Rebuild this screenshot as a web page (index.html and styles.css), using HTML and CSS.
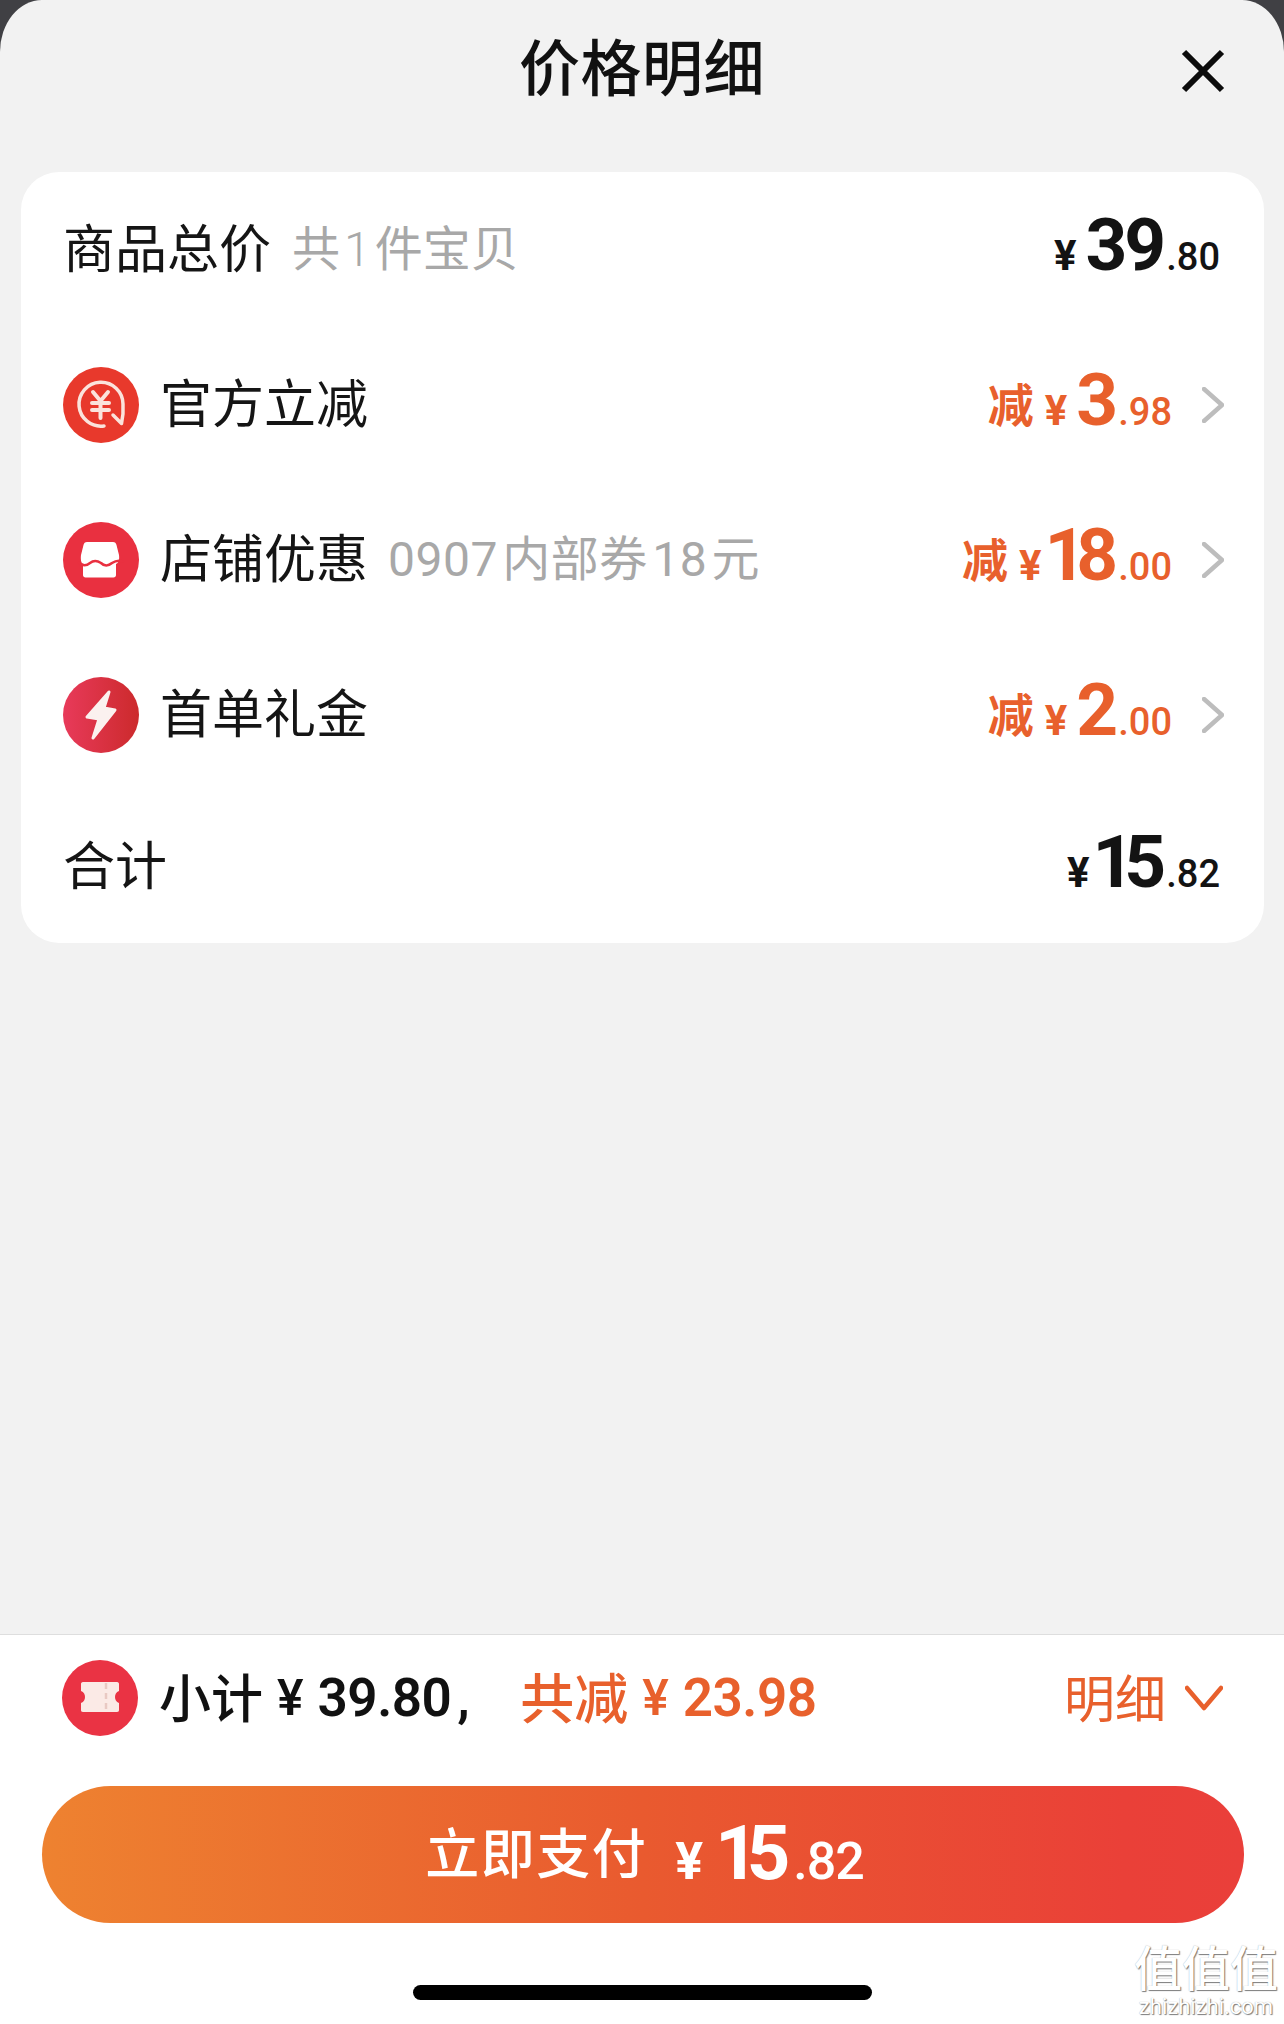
FILE: index.html
```html
<!DOCTYPE html>
<html lang="zh-CN">
<head>
<meta charset="utf-8">
<title>价格明细</title>
<link rel="stylesheet" href="styles.css">
</head>
<body>
<main class="sheet">
  <header class="header">
    <h1 class="title">价格明细</h1>
    <svg class="close" viewBox="0 0 44 44" width="44" height="44"><path d="M3 3 41 41M41 3 3 41"/></svg>
  </header>

  <section class="card">
    <div class="row">
      <div class="label"><span class="text">商品总价</span><span class="sub sub-first">共<span class="tight">1</span>件宝贝</span></div>
      <div class="amount amount-plain"><span class="yen">¥</span><span class="big">39</span><span class="cents">.80</span></div>
    </div>

    <div class="row">
      <div class="label">
        <svg class="icon" viewBox="0 0 76 76"><circle cx="38" cy="38" r="38" fill="#e8392c"/><g fill="none" stroke="#fbe3dc" stroke-width="3.500" stroke-linecap="round" stroke-linejoin="round"><path d="M41 59A22 22 0 1 1 60 37C60.500 44 60 50 58.500 56.500L50 48"/><path d="M30 25 37.500 34 45 25M29 36H46M29 43H46M37.500 34V51" stroke-width="4"/></g></svg>
        <span class="text">官方立减</span>
      </div>
      <div class="end">
        <div class="amount"><span class="jian">减</span><span class="yen">¥</span><span class="big">3</span><span class="cents">.98</span></div>
        <svg class="chev" viewBox="0 0 22 36" width="22" height="36"><path d="M2 2 20 18 2 34"/></svg>
      </div>
    </div>

    <div class="row">
      <div class="label">
        <svg class="icon" viewBox="0 0 76 76"><circle cx="38" cy="38" r="38" fill="#e93040"/><path fill="#fff" d="M26 20H50C52 20 53 21 53.500 23L56 33C56.500 37 56 41 53 42V53C53 54.500 52 55.500 50.500 55.500H22.500C21 55.500 20 54.500 20 53V42C18 41 17.500 37 18 33L20.500 23C21 21 22 20 24 20Z"/><path fill="none" stroke="#e93040" stroke-width="2.500" d="M15 40Q21 46 27 41 32 37 38 41 43 46 49 41 55 37 61 40"/></svg>
        <span class="text">店铺优惠</span><span class="sub sub-gap">0907 内部券 18 元</span>
      </div>
      <div class="end">
        <div class="amount"><span class="jian">减</span><span class="yen">¥</span><span class="big"><span class="one">1</span>8</span><span class="cents">.00</span></div>
        <svg class="chev" viewBox="0 0 22 36" width="22" height="36"><path d="M2 2 20 18 2 34"/></svg>
      </div>
    </div>

    <div class="row">
      <div class="label">
        <svg class="icon" viewBox="0 0 76 76"><defs><linearGradient id="boltbg" x1="0" x2="1" y1="0" y2="0"><stop offset="0" stop-color="#e83a5a"/><stop offset="1" stop-color="#cc2a2c"/></linearGradient></defs><circle cx="38" cy="38" r="38" fill="url(#boltbg)"/><path fill="#fbf1ef" stroke="#fbf1ef" stroke-width="3" stroke-linejoin="round" d="M46 15 24 40 36 42 30 61 52 33 41 31Z"/></svg>
        <span class="text">首单礼金</span>
      </div>
      <div class="end">
        <div class="amount"><span class="jian">减</span><span class="yen">¥</span><span class="big">2</span><span class="cents">.00</span></div>
        <svg class="chev" viewBox="0 0 22 36" width="22" height="36"><path d="M2 2 20 18 2 34"/></svg>
      </div>
    </div>

    <div class="row row-total">
      <div class="label"><span class="text">合计</span></div>
      <div class="amount amount-plain"><span class="yen">¥</span><span class="big"><span class="one">1</span>5</span><span class="cents">.82</span></div>
    </div>
  </section>

  <footer class="footer">
    <div class="summary">
      <div class="summary-left">
        <svg class="icon" viewBox="0 0 76 76"><circle cx="38" cy="38" r="38" fill="#ea3344"/><path fill="#fbeae6" d="M21 22H55C56.500 22 57 23 57 24V31C54 32 53 34.500 53 37C53 39.500 54 42 57 43V50C57 51 56.500 52 55 52H21C19.500 52 19 51 19 50V43C22 42 23 39.500 23 37C23 34.500 22 32 19 31V24C19 23 19.500 22 21 22Z"/><path fill="none" stroke="#e9c9c3" stroke-width="2.500" stroke-dasharray="6 4" d="M44 23V52"/></svg>
        <span class="sum-text">小计</span><span class="sum-yen">¥</span><span class="sum-num">39.80</span><span class="sum-num comma">,</span>
        <span class="sum-text orange sum-off">共减</span><span class="sum-yen orange">¥</span><span class="sum-num orange">23.98</span>
      </div>
      <div class="detail">
        <span class="detail-text">明细</span>
        <svg class="chev-down" viewBox="0 0 38 26" width="38" height="26"><path d="M2 3 19 23 36 3"/></svg>
      </div>
    </div>
    <button class="pay"><span class="pay-label">立即支付</span><span class="pay-yen">¥</span><span class="pay-big"><span class="pay-one">1</span>5</span><span class="pay-cents">.82</span></button>
    <div class="home"></div>
    <div class="watermark"><div class="wm-cn">值值值</div><div class="wm-en">zhizhizhi.com</div></div>
  </footer>
</main>
</body>
</html>
```

FILE: styles.css
```css
* { box-sizing: border-box; }
html, body { margin: 0; height: 2024px; background: #404044; }
body { font-family: "Noto Sans CJK SC", "Noto Sans", sans-serif; color: #111; }

.sheet {
  position: relative;
  width: 1284px;
  height: 2024px;
  background: #f2f2f2;
  border-radius: 42px 42px 0 0 / 52px 52px 0 0;
  display: flex;
  flex-direction: column;
  overflow: hidden;
}

.header {
  height: 172px;
  flex: none;
  display: flex;
  justify-content: center;
  padding-top: 27px;
  position: relative;
}
.title { margin: 0; font-size: 61px; line-height: 76px; font-weight: 500; letter-spacing: 0.500px; }
.close { position: absolute; left: 1181px; top: 49px; }
.close path { fill: none; stroke: #0c0c0c; stroke-width: 6; }

.card {
  flex: none;
  margin: 0 20px 0 21px;
  height: 771px;
  background: #fff;
  border-radius: 38px;
  padding: 0 40px 0 42px;
}
.row {
  height: 155px;
  display: flex;
  align-items: center;
  justify-content: space-between;
}
.row-total { height: 150px; }

.label {
  display: flex;
  align-items: center;
  font-size: 52px;
  line-height: 60px;
  color: #151515;
}
.text { margin-bottom: 8px; }
.icon { width: 76px; height: 76px; flex: none; margin-right: 21px; }
.sub { color: #a8a8a8; font-size: 48px; }
.sub-first { margin-left: 21px; margin-bottom: 4px; }
.tight { font-family: "Roboto", sans-serif; font-weight: 300; margin: 0 4px; }
.sub-gap { margin-left: 20px; word-spacing: -8px; font-family: "Roboto", "Noto Sans CJK SC", sans-serif; font-weight: 400; letter-spacing: 0.500px; font-size: 48px; }

.end { display: flex; align-items: center; }
.chev { margin-left: 30px; flex: none; }
.chev path { fill: none; stroke: #bdbdbd; stroke-width: 4.500; stroke-linecap: round; stroke-linejoin: round; }

.amount {
  white-space: nowrap;
  color: #e8602c;
  font-family: "Roboto", "Noto Sans CJK SC", sans-serif;
  line-height: 84px;
  font-weight: 700;
  margin-top: 10px;
}
.amount-plain { color: #131313; margin-right: 4px; }
.jian { font-family: "Noto Sans CJK SC", sans-serif; font-size: 46px; line-height: 1; font-weight: 700; margin-right: 11px; vertical-align: 3px; }
.yen { font-size: 42px; font-weight: 700; margin-right: 9px; }
.big { font-size: 73px; letter-spacing: -3px; }
.one { margin-left: -6px; letter-spacing: -10px; }
.cents { font-size: 38px; font-weight: 500; margin-left: 3px; }

.footer {
  margin-top: auto;
  height: 390px;
  flex: none;
  background: #fff;
  border-top: 1px solid #dedede;
  padding: 0 40px 0 42px;
  display: flex;
  flex-direction: column;
  position: relative;
}
.summary {
  height: 126px;
  flex: none;
  display: flex;
  align-items: center;
  justify-content: space-between;
  padding-left: 20px;
}
.summary-left { display: flex; align-items: center; }
.summary-left .icon { margin-right: 21px; }
.sum-text { font-size: 52px; line-height: 60px; font-weight: 500; color: #111; margin-bottom: 4px; }
.sum-text.orange { color: #e8602c; font-size: 54px; }
.sum-yen { font-family: "Roboto", sans-serif; font-size: 50px; font-weight: 500; margin: 0 14px 0 14px; }
.sum-num { font-family: "Roboto", sans-serif; font-size: 53px; font-weight: 600; color: #111; letter-spacing: -0.500px; }
.sum-num.orange { color: #e8602c; }
.comma { margin-left: 6px; }
.sum-off { margin-left: 51px; }
.orange { color: #e8602c; }
.detail {
  display: flex;
  align-items: center;
  color: #e8602c;
  font-size: 51px;
  line-height: 60px;
  margin-right: 21px;
}
.detail-text { margin-bottom: 4px; }
.chev-down { margin-left: 19px; }
.chev-down path { fill: none; stroke: #e8602c; stroke-width: 4.500; stroke-linecap: round; stroke-linejoin: round; }

.pay {
  display: block;
  margin-top: 25px;
  width: 1202px;
  height: 137px;
  flex: none;
  border: 0;
  padding: 10px 0 0 3px;
  border-radius: 69px;
  background: linear-gradient(90deg, #ee8230 0%, #e95a2f 50%, #ea4038 90%, #ea3f3a 100%);
  color: #fff;
  text-align: center;
  white-space: nowrap;
  font-size: 54px;
  line-height: 130px;
  font-family: "Roboto", "Noto Sans CJK SC", sans-serif;
}
.pay-label { font-family: "Noto Sans CJK SC", sans-serif; font-size: 54px; line-height: 1; font-weight: 500; letter-spacing: 1.500px; vertical-align: 5px; }
.pay-yen { font-size: 52px; line-height: 1; font-weight: 700; margin: 0 12px 0 28px; }
.pay-big { font-size: 76px; line-height: 1; font-weight: 700; letter-spacing: -4px; }
.pay-one { letter-spacing: -12px; }
.pay-cents { font-size: 52px; line-height: 1; font-weight: 500; margin-left: 7px; letter-spacing: -1px; }

.home {
  width: 459px;
  height: 15px;
  flex: none;
  margin: 62px 0 0 371px;
  border-radius: 8px;
  background: #000;
}

.watermark {
  position: absolute;
  left: 1132px;
  top: 302px;
  width: 148px;
  text-align: center;
  color: #fff;
  text-shadow: 1px 1px 1px rgba(0,0,0,.5), 0 0 1px rgba(0,0,0,.35);
}
.wm-cn { font-size: 48px; line-height: 56px; font-weight: 500; }
.wm-en { font-family: "Roboto", sans-serif; font-size: 22px; line-height: 24px; margin-top: 2px; }
```
